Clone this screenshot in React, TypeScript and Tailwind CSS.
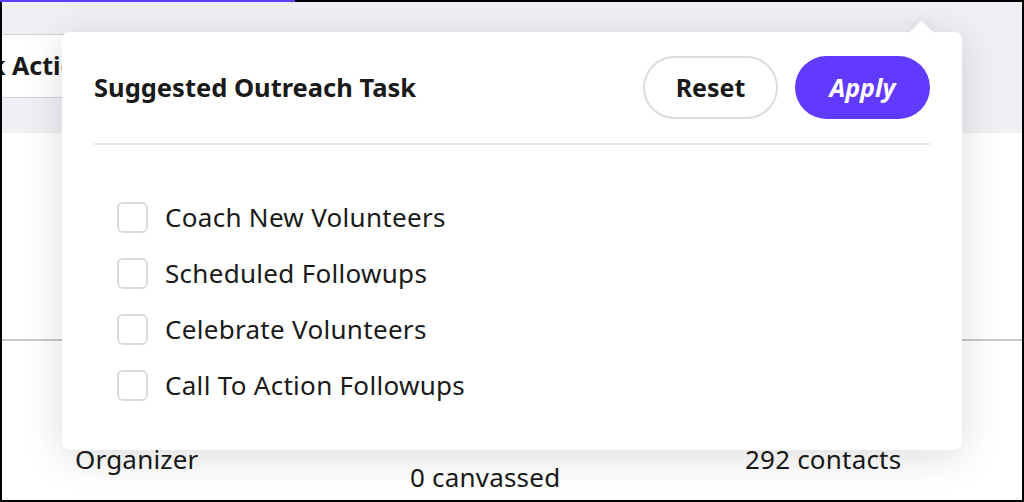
import React, { useState } from 'react';

const TASKS = [
  'Coach New Volunteers',
  'Scheduled Followups',
  'Celebrate Volunteers',
  'Call To Action Followups',
];

const App: React.FC = () => {
  const [checked, setChecked] = useState<Record<string, boolean>>({});

  const toggle = (task: string) =>
    setChecked((prev) => ({ ...prev, [task]: !prev[task] }));

  return (
    <div
      className="w-[1024px] h-[502px] overflow-hidden bg-white text-[#1a1a1a]"
      style={{ fontFamily: '"Noto Sans", "Open Sans", sans-serif' }}
    >
      <div className="relative w-full h-full flex flex-col border-x-2 border-b-2 border-black">
        {/* Top border with active tab accent */}
        <div className="flex h-[2px] shrink-0 -mx-[2px]">
          <div className="w-[295px] bg-[#5b3df5]" />
          <div className="flex-1 bg-black" />
        </div>

        {/* Header band */}
        <div className="h-[131px] shrink-0 bg-[#eef0f4] pt-[32px]">
          <div className="h-[64px] w-[300px] bg-white border-y border-[#d4d4d8] flex items-center overflow-hidden">
            <span className="ml-[-52px] text-[25px] font-bold whitespace-nowrap">Task Actions</span>
          </div>
        </div>

        {/* Content */}
        <div className="h-[208px] shrink-0 border-b-2 border-[#c8c8cc]" />
        <div className="flex-1 grid grid-cols-[335px_335px_1fr] pl-[73px] text-[26px] leading-none tracking-[0.2px]">
          <div className="pt-[105px]">Organizer</div>
          <div className="pt-[123px]">0 canvassed</div>
          <div className="pt-[105px]">292 contacts</div>
        </div>

        {/* Popover */}
        <div className="absolute left-[60px] top-[32px] w-[900px] h-[418px] bg-white rounded-lg shadow-[0_6px_40px_rgba(0,0,0,0.14)] px-8 pt-6">
          <div className="absolute -top-[8px] right-[32px] w-[17px] h-[17px] bg-white rotate-45 shadow-[-3px_-3px_8px_rgba(0,0,0,0.04)]" />
          <div className="relative flex items-center justify-between pb-6 border-b-2 border-[#e8e8ea]">
            <h2 className="text-[25.5px] font-bold">Suggested Outreach Task</h2>
            <div className="flex gap-[17px]">
              <button className="w-[135px] h-[63px] rounded-full border-2 border-[#dcdcdc] bg-white text-[25px] font-bold">
                Reset
              </button>
              <button className="w-[135px] h-[63px] rounded-full bg-[#6139ff] text-white text-[25px] font-bold italic">
                Apply
              </button>
            </div>
          </div>

          <ul className="pt-[57px] pl-[23px] flex flex-col gap-[26px]">
            {TASKS.map((task) => (
              <li key={task} className="flex items-center gap-[17px] h-[30px]">
                <button
                  onClick={() => toggle(task)}
                  className={`w-[31px] h-[31px] rounded-md border-2 ${
                    checked[task] ? 'bg-[#6139ff] border-[#6139ff]' : 'border-[#dadada] bg-white'
                  }`}
                />
                <span className="text-[26px] tracking-[0.3px]">{task}</span>
              </li>
            ))}
          </ul>
        </div>
      </div>
    </div>
  );
};

export default App;
